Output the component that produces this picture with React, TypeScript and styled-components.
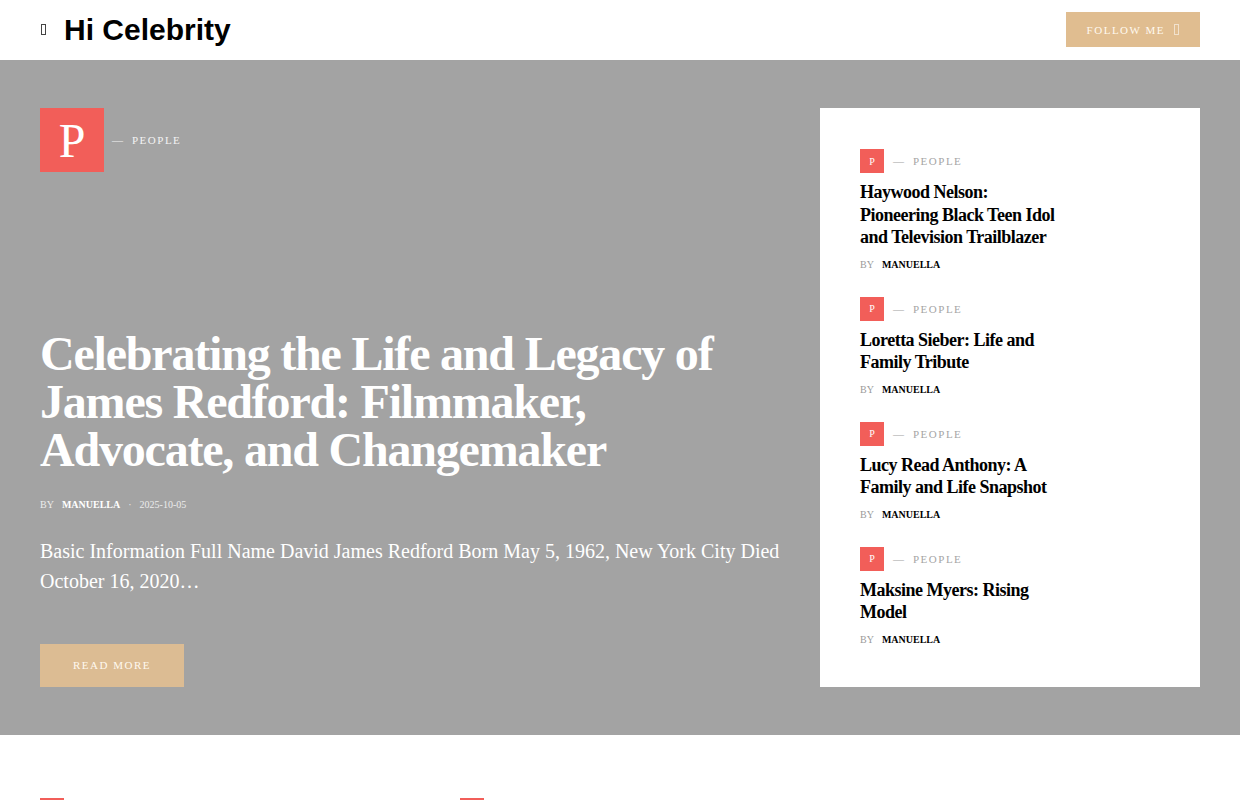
import { FC } from 'react'
import styled, { createGlobalStyle } from 'styled-components'

const GlobalStyle = createGlobalStyle`
  * { box-sizing: border-box; }
  body {
    margin: 0;
    background: #fff;
    font-family: "Liberation Serif", "Times New Roman", serif;
    color: #000;
  }
`

type Post = { title: string; author: string }

const SIDE_POSTS: Post[] = [
  { title: 'Haywood Nelson: Pioneering Black Teen Idol and Television Trailblazer', author: 'Manuella' },
  { title: 'Loretta Sieber: Life and Family Tribute', author: 'Manuella' },
  { title: 'Lucy Read Anthony: A Family and Life Snapshot', author: 'Manuella' },
  { title: 'Maksine Myers: Rising Model', author: 'Manuella' },
]

const Header = styled.header`
  height: 60px;
  padding: 0 40px 1px 40px;
  display: flex;
  align-items: center;
  justify-content: space-between;
  background: #fff;
`

const Brand = styled.div`
  display: flex;
  align-items: center;
  gap: 18px;
  padding-left: 1px;
`

// missing icon-font glyph, shown as an empty box
const Glyph = styled.span<{ $light?: boolean }>`
  display: inline-block;
  width: 5px;
  height: 11px;
  border: 1px solid ${({ $light }) => ($light ? 'rgba(255,255,255,0.55)' : '#444')};
`

const Logo = styled.a`
  font-family: "Liberation Sans", Arial, sans-serif;
  font-weight: 700;
  font-size: 30px;
  color: #000;
  text-decoration: none;
  line-height: 1;
`

const GoldButton = styled.a<{ $tall?: boolean }>`
  display: inline-flex;
  align-items: center;
  gap: 9px;
  height: ${({ $tall }) => ($tall ? '43px' : '35px')};
  padding: ${({ $tall }) => ($tall ? '0 33px 0 33px' : '0 21px 0 21px')};
  background: ${({ $tall }) => ($tall ? '#dcbc93' : '#e0bd90')};
  color: #fff9ef;
  font-size: 11px;
  letter-spacing: 1.5px;
  text-transform: uppercase;
  text-decoration: none;
  width: fit-content;
`

const Hero = styled.section`
  background: #a3a3a3;
  padding: 48px 40px;
  display: grid;
  grid-template-columns: 740px 380px;
  justify-content: space-between;
`

const Lead = styled.div`
  display: flex;
  flex-direction: column;
  justify-content: space-between;
`

const CategoryRow = styled.div<{ $light?: boolean }>`
  display: flex;
  align-items: center;
  font-size: 11px;
  letter-spacing: 1.5px;
  text-transform: uppercase;
  color: ${({ $light }) => ($light ? '#f3f3f3' : '#a5a5a5')};
`

const CatBox = styled.span<{ $size: number }>`
  width: ${({ $size }) => $size}px;
  height: ${({ $size }) => $size}px;
  background: #f25e59;
  color: #fff;
  display: flex;
  align-items: center;
  justify-content: center;
  font-size: ${({ $size }) => ($size > 40 ? '48px' : '10px')};
  letter-spacing: 0;
  margin-right: ${({ $size }) => ($size > 40 ? '8px' : '9px')};
`

const Dash = styled.span`
  margin-right: 9px;
  letter-spacing: 0;
`

const LeadTitle = styled.h1`
  margin: 0;
  font-size: 48px;
  line-height: 48px;
  font-weight: 700;
  letter-spacing: -0.025em;
  color: #fff;
`

const Meta = styled.div<{ $light?: boolean; $gap?: number }>`
  display: flex;
  align-items: center;
  margin-top: ${({ $gap }) => $gap ?? 0}px;
  font-size: 10px;
  line-height: 12px;
  color: ${({ $light }) => ($light ? '#ececec' : '#9a9a9a')};
`

const Author = styled.span<{ $light?: boolean }>`
  margin-left: 8px;
  font-weight: 700;
  text-transform: uppercase;
  color: ${({ $light }) => ($light ? '#fff' : '#000')};
`

const Dot = styled.span`
  margin: 0 8px;
`

const Excerpt = styled.p`
  margin: 25px 0 48px;
  font-size: 20px;
  line-height: 30px;
  color: #fff;
`

const SideCard = styled.aside`
  background: #fff;
  padding: 41px 40px;
  display: flex;
  flex-direction: column;
  gap: 26px;
`

const SideItem = styled.article`
  width: 205px;
`

const SideTitle = styled.h3`
  margin: 8px 0 10px;
  font-size: 18px;
  line-height: 22.5px;
  font-weight: 700;
  letter-spacing: -0.028em;
`

const Grid = styled.section`
  padding: 63px 40px 40px;
  display: grid;
  grid-template-columns: repeat(3, 320px);
  column-gap: 100px;
`

const Category: FC<{ big?: boolean; light?: boolean }> = ({ big, light }) => (
  <CategoryRow $light={light}>
    <CatBox $size={big ? 64 : 24}>P</CatBox>
    <Dash>—</Dash>
    People
  </CategoryRow>
)

const App: FC = () => (
  <>
    <GlobalStyle />
    <Header>
      <Brand>
        <Glyph />
        <Logo href="#">Hi Celebrity</Logo>
      </Brand>
      <GoldButton href="#">
        Follow Me <Glyph $light />
      </GoldButton>
    </Header>

    <Hero>
      <Lead>
        <Category big light />
        <div>
          <LeadTitle>
            Celebrating the Life and Legacy of James Redford: Filmmaker, Advocate, and Changemaker
          </LeadTitle>
          <Meta $light $gap={25}>
            BY <Author $light>Manuella</Author>
            <Dot>·</Dot>
            2025-10-05
          </Meta>
          <Excerpt>
            Basic Information Full Name David James Redford Born May 5, 1962, New York City Died October 16, 2020…
          </Excerpt>
          <GoldButton href="#" $tall>
            Read More
          </GoldButton>
        </div>
      </Lead>

      <SideCard>
        {SIDE_POSTS.map((post) => (
          <SideItem key={post.title}>
            <Category />
            <SideTitle>{post.title}</SideTitle>
            <Meta>
              BY <Author>{post.author}</Author>
            </Meta>
          </SideItem>
        ))}
      </SideCard>
    </Hero>

    <Grid>
      <Category />
      <Category />
    </Grid>
  </>
)

export default App
